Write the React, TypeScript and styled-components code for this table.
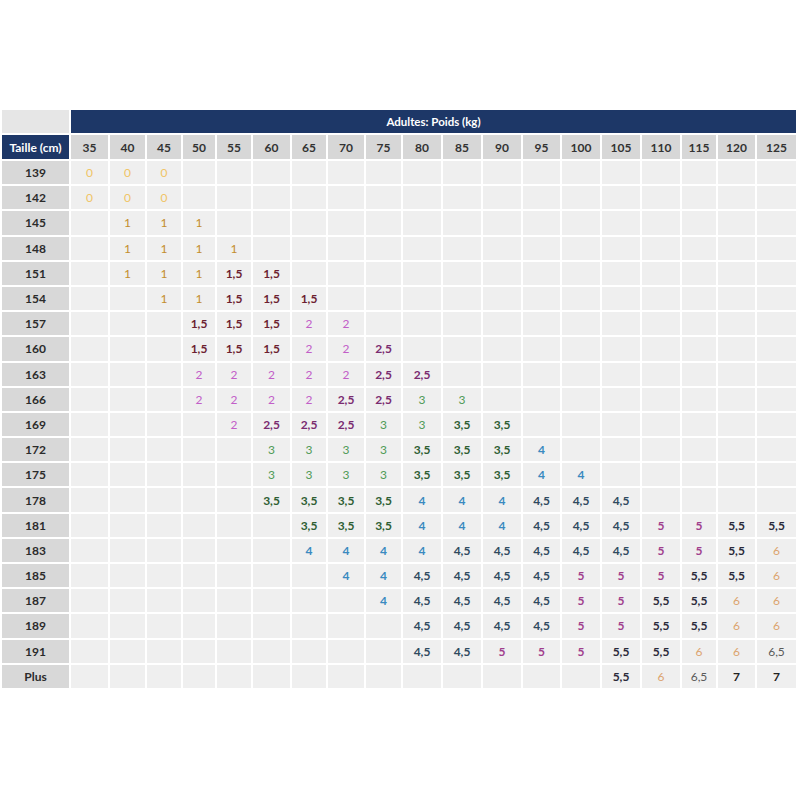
import React from "react";
import styled, { createGlobalStyle } from "styled-components";

const Global = createGlobalStyle`
  html, body { margin: 0; padding: 0; background: #ffffff; }
  body { font-family: Lato, "Open Sans", sans-serif; }
`;

const WEIGHTS = ["35","40","45","50","55","60","65","70","75","80","85","90","95","100","105","110","115","120","125"];
const COL_WIDTHS = [67, 37, 35, 34, 32, 34, 37, 34, 36, 35, 38, 38, 38, 37, 38, 38, 38, 34, 37, 39];

type Row = { label: string; start: number; values: string[] };

const ROWS: Row[] = [
  { label: "139", start: 0, values: ["0","0","0"] },
  { label: "142", start: 0, values: ["0","0","0"] },
  { label: "145", start: 1, values: ["1","1","1"] },
  { label: "148", start: 1, values: ["1","1","1","1"] },
  { label: "151", start: 1, values: ["1","1","1","1,5","1,5"] },
  { label: "154", start: 2, values: ["1","1","1,5","1,5","1,5"] },
  { label: "157", start: 3, values: ["1,5","1,5","1,5","2","2"] },
  { label: "160", start: 3, values: ["1,5","1,5","1,5","2","2","2,5"] },
  { label: "163", start: 3, values: ["2","2","2","2","2","2,5","2,5"] },
  { label: "166", start: 3, values: ["2","2","2","2","2,5","2,5","3","3"] },
  { label: "169", start: 4, values: ["2","2,5","2,5","2,5","3","3","3,5","3,5"] },
  { label: "172", start: 5, values: ["3","3","3","3","3,5","3,5","3,5","4"] },
  { label: "175", start: 5, values: ["3","3","3","3","3,5","3,5","3,5","4","4"] },
  { label: "178", start: 5, values: ["3,5","3,5","3,5","3,5","4","4","4","4,5","4,5","4,5"] },
  { label: "181", start: 6, values: ["3,5","3,5","3,5","4","4","4","4,5","4,5","4,5","5","5","5,5","5,5"] },
  { label: "183", start: 6, values: ["4","4","4","4","4,5","4,5","4,5","4,5","4,5","5","5","5,5","6"] },
  { label: "185", start: 7, values: ["4","4","4,5","4,5","4,5","4,5","5","5","5","5,5","5,5","6"] },
  { label: "187", start: 8, values: ["4","4,5","4,5","4,5","4,5","5","5","5,5","5,5","6","6"] },
  { label: "189", start: 9, values: ["4,5","4,5","4,5","4,5","5","5","5,5","5,5","6","6"] },
  { label: "191", start: 9, values: ["4,5","4,5","5","5","5","5,5","5,5","6","6","6,5"] },
  { label: "Plus", start: 14, values: ["5,5","6","6,5","7","7"] },
];

const STYLE: Record<string, { color: string; weight: number }> = {
  "0": { color: "#f0c466", weight: 400 },
  "1": { color: "#c38d2c", weight: 400 },
  "1,5": { color: "#6c1f32", weight: 700 },
  "2": { color: "#c25ec8", weight: 400 },
  "2,5": { color: "#7a2b70", weight: 700 },
  "3": { color: "#4f9b57", weight: 400 },
  "3,5": { color: "#2e5e33", weight: 700 },
  "4": { color: "#3a8ac0", weight: 700 },
  "4,5": { color: "#2f4a60", weight: 700 },
  "5": { color: "#a03e8d", weight: 700 },
  "5,5": { color: "#2a2a3a", weight: 700 },
  "6": { color: "#dca46e", weight: 400 },
  "6,5": { color: "#5a5a5a", weight: 400 },
  "7": { color: "#222222", weight: 700 },
};

const Page = styled.div`
  padding: 110px 2px 0 2px;
`;

const Table = styled.div`
  display: grid;
  grid-template-columns: ${COL_WIDTHS.map((w) => `${w}px`).join(" ")};
  grid-template-rows: 23px 24px repeat(21, 23.2px);
  column-gap: 2px;
  row-gap: 2px;
  width: 796px;
  background: #ffffff;
`;

const Corner = styled.div`
  background: #e6e6e6;
`;

const Title = styled.div`
  grid-column: 2 / -1;
  background: #1d3767;
  color: #ffffff;
  font-weight: 700;
  font-size: 11.5px;
  display: flex;
  align-items: center;
  justify-content: center;
`;

const HeadCell = styled.div<{ $dark?: boolean }>`
  background: ${(p) => (p.$dark ? "#1d3767" : "#d7d7d7")};
  color: ${(p) => (p.$dark ? "#ffffff" : "#333333")};
  font-weight: 700;
  font-size: 12px;
  display: flex;
  align-items: center;
  justify-content: center;
  white-space: nowrap;
`;

const RowLabel = styled.div`
  background: #d8d8d8;
  color: #2b2b2b;
  font-weight: 700;
  font-size: 12px;
  display: flex;
  align-items: center;
  justify-content: center;
`;

const Cell = styled.div<{ $color: string; $weight: number }>`
  background: #efefef;
  color: ${(p) => p.$color};
  font-weight: ${(p) => p.$weight};
  font-size: 12px;
  display: flex;
  align-items: center;
  justify-content: center;
`;

export default function App() {
  return (
    <Page>
      <Global />
      <Table>
        <Corner />
        <Title>Adultes: Poids (kg)</Title>
        <HeadCell $dark>Taille (cm)</HeadCell>
        {WEIGHTS.map((w) => (
          <HeadCell key={w}>{w}</HeadCell>
        ))}
        {ROWS.map((r) => (
          <React.Fragment key={r.label}>
            <RowLabel>{r.label}</RowLabel>
            {WEIGHTS.map((w, i) => {
              const v = i >= r.start && i < r.start + r.values.length ? r.values[i - r.start] : "";
              const s = STYLE[v] || { color: "#333", weight: 400 };
              return (
                <Cell key={w} $color={s.color} $weight={s.weight}>
                  {v}
                </Cell>
              );
            })}
          </React.Fragment>
        ))}
      </Table>
    </Page>
  );
}
